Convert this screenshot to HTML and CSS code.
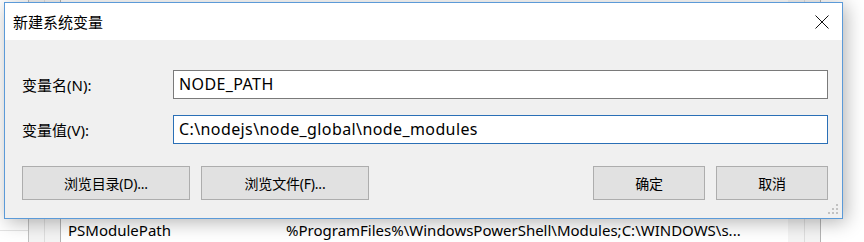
FILE: index.html
```html
<!DOCTYPE html>
<html lang="zh-CN">
<head>
    <meta charset="UTF-8">
    <meta name="viewport" content="width=device-width, initial-scale=1.0">
    <title>新建系统变量</title>
    <link rel="stylesheet" href="styles.css">
</head>
<body>
    <div class="desk">
        <!-- the environment variables window behind the dialog -->
        <div class="behind">
            <div class="col-edge"></div>
            <div class="col-gutter"></div>
            <div class="col-gutter dark"></div>
            <div class="col-list">
                <div class="list-row">
                    <span class="cell-name">PSModulePath</span>
                    <span class="cell-value">%ProgramFiles%\WindowsPowerShell\Modules;C:\WINDOWS\s...</span>
                </div>
            </div>
            <div class="col-gutter light"></div>
            <div class="col-gutter dark"></div>
            <div class="col-rest"></div>
        </div>

        <div class="dialog">
            <div class="titlebar">
                <span class="title">新建系统变量</span>
                <svg class="close" width="14" height="14" viewBox="0 0 14 14">
                    <path d="M0.5 0.5 L13.5 13.5 M13.5 0.5 L0.5 13.5" stroke="#111" stroke-width="1" fill="none"/>
                </svg>
            </div>
            <div class="content">
                <div class="fields">
                    <label class="label">变量名(N):</label>
                    <div class="input">NODE_PATH</div>
                    <label class="label">变量值(V):</label>
                    <div class="input focused">C:\nodejs\node_global\node_modules</div>
                </div>
                <div class="buttons">
                    <div class="group">
                        <button class="btn wide">浏览目录(D)...</button>
                        <button class="btn wide">浏览文件(F)...</button>
                    </div>
                    <div class="group">
                        <button class="btn">确定</button>
                        <button class="btn">取消</button>
                    </div>
                </div>
            </div>
            <svg class="grip" width="11" height="11" viewBox="0 0 11 11">
                <rect x="8" y="0" width="2" height="2" fill="#c2c2c2"/>
                <rect x="4" y="4" width="2" height="2" fill="#c2c2c2"/>
                <rect x="8" y="4" width="2" height="2" fill="#c2c2c2"/>
                <rect x="0" y="8" width="2" height="2" fill="#c2c2c2"/>
                <rect x="4" y="8" width="2" height="2" fill="#c2c2c2"/>
                <rect x="8" y="8" width="2" height="2" fill="#c2c2c2"/>
            </svg>
        </div>
    </div>
</body>
</html>
```

FILE: styles.css
```css
body {
    margin: 0;
    padding: 0;
    background-color: #fff;
    font-family: 'Noto Sans', 'Noto Sans CJK SC', sans-serif;
    color: #000;
}

.desk {
    position: relative;
    width: 864px;
    height: 242px;
    overflow: hidden;
}

/* window behind */
.behind {
    display: flex;
    height: 242px;
}

.col-edge {
    width: 28px;
    border-right: 1px solid #c0c0c0;
    background: linear-gradient(to bottom, #fff 230px, #e4e4e4 230px, #e4e4e4 231px, #fff 231px);
}

.col-gutter {
    width: 15px;
    background-color: #f4f4f4;
    border-right: 1px solid #dedede;
}

.col-gutter.dark {
    border-right-color: #b4b4b4;
}

.col-gutter.light {
    width: 16px;
}

.col-list {
    width: 727px;
    display: flex;
    flex-direction: column;
    justify-content: flex-end;
    background-color: #fff;
}

.list-row {
    display: flex;
    height: 22px;
    font-size: 15px;
    line-height: 20px;
    white-space: nowrap;
}

.cell-name {
    width: 218px;
    padding-left: 7px;
}

.col-rest {
    flex: 1;
}

/* dialog */
.dialog {
    position: absolute;
    left: 4px;
    top: 2px;
    width: 837px;
    height: 215px;
    border: 1px solid #5b9ad8;
    background-color: #f0f0f0;
    box-shadow: 3px 3px 18px rgba(0, 0, 0, 0.3);
    display: flex;
    flex-direction: column;
}

.titlebar {
    height: 37px;
    background-color: #fff;
    display: flex;
    align-items: center;
    justify-content: space-between;
    padding: 0 13px 0 8px;
}

.title {
    font-size: 15px;
}

.close {
    display: block;
    margin-top: 1px;
}

.content {
    flex: 1;
    padding: 30px 14px 0 17px;
    display: flex;
    flex-direction: column;
}

.fields {
    display: grid;
    grid-template-columns: 151px 1fr;
    row-gap: 16px;
    align-items: center;
}

.label {
    font-size: 15px;
}

.input {
    height: 27px;
    border: 1px solid #7a7a7a;
    background-color: #fff;
    font-size: 16px;
    letter-spacing: 0.4px;
    line-height: 26px;
    padding-left: 5px;
    white-space: nowrap;
}

.input.focused {
    border-color: #2a6fb6;
}

.buttons {
    display: flex;
    justify-content: space-between;
    margin-top: 22px;
}

.group {
    display: flex;
    gap: 11px;
}

.btn {
    width: 112px;
    height: 34px;
    background-color: #e1e1e1;
    border: 1px solid #adadad;
    font-family: 'Noto Sans', 'Noto Sans CJK SC', sans-serif;
    font-size: 14px;
    letter-spacing: -0.2px;
    color: #000;
    padding: 0;
}

.btn.wide {
    width: 168px;
}

.grip {
    position: absolute;
    right: 3px;
    bottom: 3px;
}
```
